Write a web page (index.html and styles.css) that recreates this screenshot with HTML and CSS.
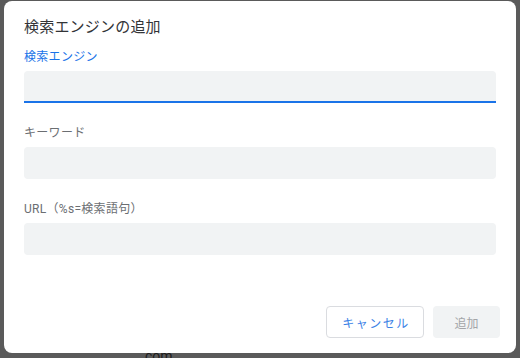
FILE: index.html
```html
<!DOCTYPE html>
<html lang="ja">
<head>
<meta charset="utf-8">
<link rel="stylesheet" href="styles.css">
</head>
<body>
<div class="dialog">
  <div class="title">検索エンジンの追加</div>
  <div class="field">
    <div class="label label-active">検索エンジン</div>
    <div class="input input-active"></div>
  </div>
  <div class="field">
    <div class="label">キーワード</div>
    <div class="input"></div>
  </div>
  <div class="field">
    <div class="label">URL（%s=検索語句）</div>
    <div class="input"></div>
  </div>
  <div class="footer">
    <button class="btn btn-cancel">キャンセル</button>
    <button class="btn btn-add">追加</button>
  </div>
</div>
<div class="behind">com</div>
</body>
</html>
```
FILE: styles.css
```css
html, body {
  margin: 0;
  padding: 0;
  height: 100%;
  overflow: hidden;
}
body {
  background: #5a5a5a;
  font-family: Roboto, "Noto Sans CJK JP", sans-serif;
}
.dialog {
  margin: 1px 0 0 4px;
  width: 512px;
  height: 352px;
  box-sizing: border-box;
  background: #fff;
  border-radius: 8px;
  padding: 16px 20px 0 20px;
  display: flex;
  flex-direction: column;
  position: relative;
  z-index: 1;
}
.title {
  font-size: 15px;
  line-height: 20px;
  color: #333437;
  letter-spacing: 0.2px;
  margin-bottom: 12px;
}
.field {
  display: flex;
  flex-direction: column;
  margin-bottom: 22px;
}
.label {
  font-size: 12px;
  line-height: 16px;
  color: #6b6e72;
  letter-spacing: 0.3px;
  margin-bottom: 6px;
}
.label-active {
  color: #1a73e8;
}
.input {
  height: 32px;
  box-sizing: border-box;
  background: #f1f3f4;
  border-radius: 4px;
}
.input-active {
  border-bottom: 2px solid #1a73e8;
  border-radius: 4px 4px 0 0;
}
.footer {
  margin-top: auto;
  display: flex;
  justify-content: flex-end;
  gap: 9px;
  margin-right: -4px;
  padding-bottom: 15px;
}
.btn {
  font-family: Roboto, "Noto Sans CJK JP", sans-serif;
  font-size: 12px;
  height: 32px;
  border-radius: 4px;
  box-sizing: border-box;
  padding: 0;
  cursor: pointer;
}
.btn-cancel {
  width: 98px;
  background: #fff;
  border: 1px solid #dadce0;
  color: #3b82e6;
  letter-spacing: 1.5px;
  padding-left: 2px;
}
.btn-add {
  width: 67px;
  background: #f1f3f4;
  border: none;
  color: #a3a5a8;
}
.behind {
  margin-top: -2px;
  padding-left: 145px;
  font-size: 14px;
  line-height: 10px;
  color: #1c1c1c;
}
```
